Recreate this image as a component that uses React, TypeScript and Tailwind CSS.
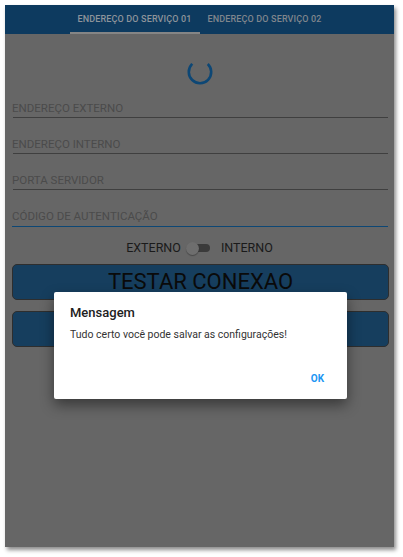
import React from "react";

const CAMPOS = [
  { label: "ENDEREÇO EXTERNO", altura: "h-[33px]", foco: false },
  { label: "ENDEREÇO INTERNO", altura: "h-[36px]", foco: false },
  { label: "PORTA SERVIDOR", altura: "h-[36px]", foco: false },
  { label: "CÓDIGO DE AUTENTICAÇÃO", altura: "h-[37px]", foco: true },
];

function Spinner() {
  return (
    <svg width="26" height="26" viewBox="0 0 26 26">
      <circle
        cx="13"
        cy="13"
        r="11.2"
        fill="none"
        stroke="#0d4775"
        strokeWidth="2.6"
        strokeDasharray="53 18"
        transform="rotate(-46 13 13)"
      />
    </svg>
  );
}

export default function App() {
  return (
    <div className="w-[403px] h-[557px] bg-white pt-[5px] pl-[5px] font-['Roboto','Liberation_Sans',sans-serif]">
      <div className="relative w-[389px] h-[542px] bg-[#666666] shadow-[2px_3px_4px_rgba(0,0,0,0.45)]">
        {/* Abas */}
        <div className="h-[29px] bg-[#0d3a5f] flex justify-center">
          <div className="relative w-[130px] flex items-center justify-center text-[9px] font-medium text-[#8e949b] tracking-[0.15px]">
            ENDEREÇO DO SERVIÇO 01
            <div className="absolute left-0 right-0 bottom-0 h-[2px] bg-[#858585]" />
          </div>
          <div className="w-[130px] flex items-center justify-center text-[9px] font-medium text-[#80868d] tracking-[0.15px]">
            ENDEREÇO DO SERVIÇO 02
          </div>
        </div>

        {/* Carregando */}
        <div className="mt-[25px] flex justify-center">
          <Spinner />
        </div>

        {/* Campos */}
        <div className="ml-[8px] mr-[6px]">
          {CAMPOS.map((c) => (
            <div
              key={c.label}
              className={`${c.altura} flex items-end pb-[2px] border-b ${c.foco ? "border-[#0d4775] pb-[3px] -ml-[1px] pl-[1px]" : "border-[#3f3f3f]"}`}
            >
              <span className="text-[11.5px] leading-[14px] text-[#4b4b4b] -ml-[1px]">{c.label}</span>
            </div>
          ))}
        </div>

        {/* Externo / Interno */}
        <div className="h-[37px] pt-[5px] flex items-center justify-center text-[12.5px] text-[#1a1a1a]">
          <span>EXTERNO</span>
          <div className="relative w-[24px] h-[13px] ml-[5px] mr-[11px] flex items-center">
            <div className="absolute left-[3px] right-0 h-[8px] rounded-full bg-[#3a3a3a]" />
            <div className="relative w-[13px] h-[13px] rounded-full bg-[#6e6e6e] shadow-[0_1px_1px_rgba(0,0,0,0.3)]" />
          </div>
          <span>INTERNO</span>
        </div>

        {/* Botões */}
        <div className="ml-[7px] mr-[5px] flex flex-col gap-[11px]">
          <button className="h-[36px] rounded-[5px] border border-[#2e2e2e] bg-[#163e5e] text-[22px] leading-none text-[#0a0a0a]">
            TESTAR CONEXAO
          </button>
          {/* segundo botão fica escondido atrás do diálogo */}
          <button className="h-[36px] rounded-[5px] border border-[#2e2e2e] bg-[#163e5e]" />
        </div>

        {/* Diálogo */}
        <div className="absolute left-[49px] top-[287px] w-[293px] h-[107px] bg-white rounded-[2px] shadow-[0_6px_14px_rgba(0,0,0,0.45)]">
          <p className="pt-[13px] pl-[16px] text-[13px] leading-[16px] font-medium text-[#212121]">Mensagem</p>
          <p className="mt-[7px] pl-[16px] text-[10.5px] leading-[14px] text-[#333333]">
            Tudo certo você pode salvar as configurações!
          </p>
          <div className="absolute right-[23px] top-[81px] text-[10px] leading-[12px] font-bold text-[#2196f3]">OK</div>
        </div>
      </div>
    </div>
  );
}
